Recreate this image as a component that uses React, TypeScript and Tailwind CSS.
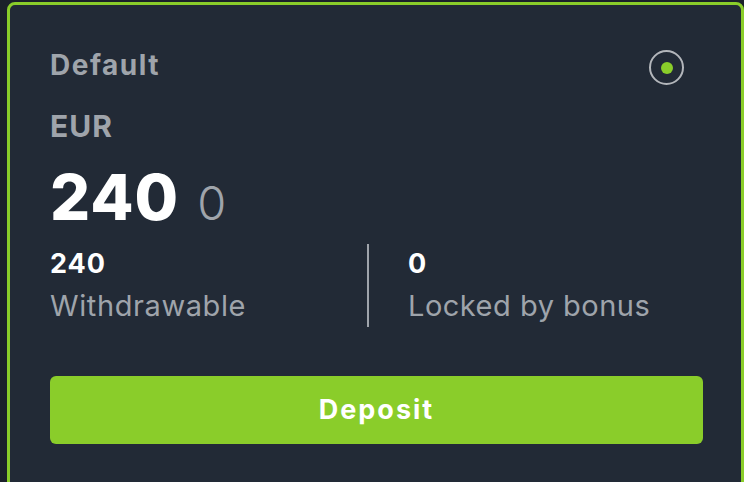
import React from "react";

const font = { fontFamily: "Inter, 'Open Sans', sans-serif" };

export default function App() {
  return (
    <div className="h-screen w-full overflow-hidden bg-[#1b212a] pl-[7px] pt-[2px]" style={font}>
      <div className="h-[520px] rounded-lg border-[3px] border-[#8acd2a] bg-[#222a36] pl-[40px] pr-[38px] pt-[46px]">
        <div className="flex items-start justify-between">
          <div className="text-[28px] font-bold leading-none tracking-[1.5px] text-[#9fa4ab]">Default</div>
          <div className="mr-[19px] -mt-[1px] flex h-[35px] w-[35px] items-center justify-center rounded-full border-2 border-[#b3b6bb]">
            <div className="h-[12px] w-[12px] rounded-full bg-[#8acd2a]" />
          </div>
        </div>
        <div className="mt-[26px] text-[30px] font-bold leading-none tracking-[1px] text-[#9fa4ab]">EUR</div>
        <div className="mt-[25px] flex items-baseline leading-none">
          <span className="text-[63px] font-extrabold tracking-[1px] text-white">240</span>
          <span className="ml-[18px] text-[47px] font-light text-[#9fa4ab]">0</span>
        </div>
        <div className="mt-[15px] flex h-[83px]">
          <div className="w-[317px] pt-[6px]">
            <div className="text-[27px] font-bold leading-none tracking-[1px] text-white">240</div>
            <div className="mt-[14px] text-[29px] leading-none tracking-[0.6px] text-[#9fa4ab]">Withdrawable</div>
          </div>
          <div className="w-[2px] bg-[#9fa4ab]" />
          <div className="pl-[39px] pt-[6px]">
            <div className="text-[27px] font-bold leading-none text-white">0</div>
            <div className="mt-[14px] text-[29px] leading-none tracking-[0.5px] text-[#9fa4ab]">Locked by bonus</div>
          </div>
        </div>
        <button className="mt-[49px] flex h-[68px] w-full items-center justify-center rounded-md bg-[#8acd2a] text-[27px] font-bold tracking-[2px] text-white">
          Deposit
        </button>
      </div>
    </div>
  );
}
